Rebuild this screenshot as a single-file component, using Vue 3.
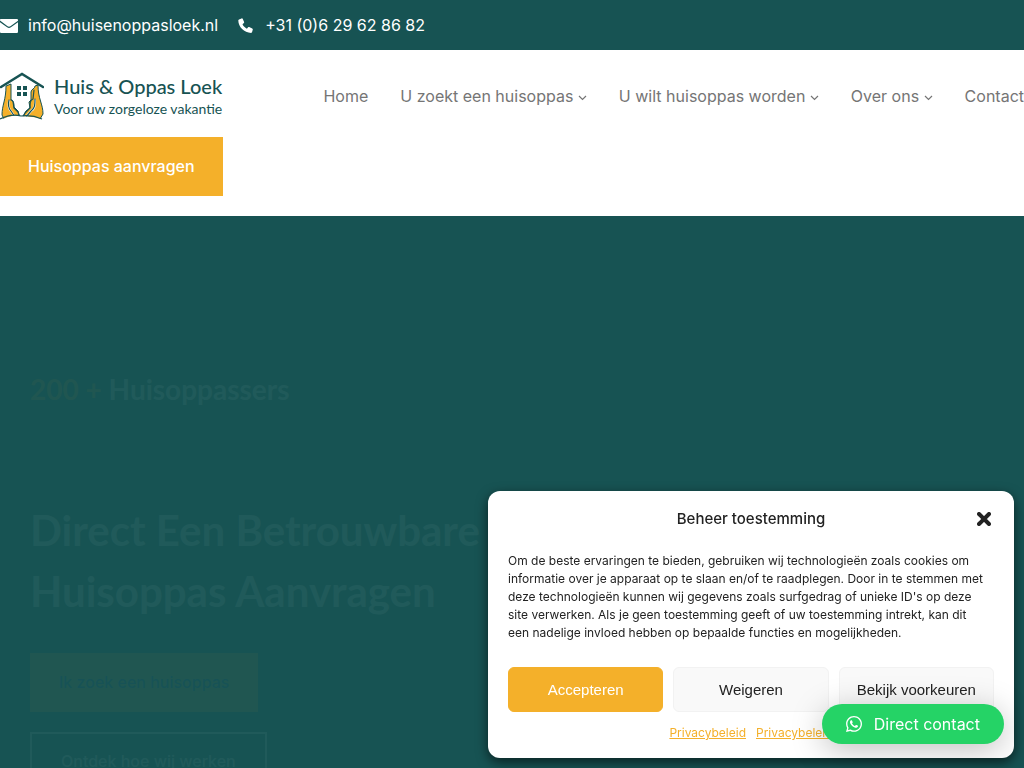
<script setup>
import { ref } from 'vue'

const consentOpen = ref(true)

const menu = [
  { label: 'Home', sub: false },
  { label: 'U zoekt een huisoppas', sub: true },
  { label: 'U wilt huisoppas worden', sub: true },
  { label: 'Over ons', sub: true },
  { label: 'Contact', sub: false },
]
</script>

<template>
  <div class="page">
    <div class="topbar">
      <a class="contact mail" href="mailto:info@huisenoppasloek.nl">
        <svg width="18" height="16" viewBox="0 0 18 16" aria-hidden="true">
          <path fill="#fff" d="M0 3.500V2.800C0 2.200.4 2 1 2h16c.6 0 1 .3 1 .9v.8l-7.600 5.500c-.8.6-2 .6-2.800 0zM0 5.200l7.100 5.100c1.200.8 2.600.8 3.800 0L18 5.200v9.300c0 1-.6 1.500-1.500 1.500h-15C.6 16 0 15.500 0 14.500z" />
        </svg>
        <span>info@huisenoppasloek.nl</span>
      </a>
      <a class="contact phone" href="tel:+31629628682">
        <svg width="15" height="15" viewBox="0 0 15 15" aria-hidden="true">
          <path fill="#fff" d="M1 1.600L3.600.4c.5-.2 1 0 1.200.5l1.300 3c.2.4.1.8-.2 1.100L4.500 6.300c.9 2 2.400 3.500 4.400 4.400l1.200-1.400c.3-.3.7-.4 1.100-.2l3 1.300c.5.2.7.7.6 1.200l-.7 2.500c-.1.500-.5.800-1 .8C6.200 14.900.3 9 .3 2.600c0-.5.2-.8.700-1z" />
        </svg>
        <span>+31 (0)6 29 62 86 82</span>
      </a>
    </div>

    <header class="header">
      <div class="bar">
        <a class="logo" href="#" aria-label="Huis &amp; Oppas Loek">
          <svg width="44" height="50" viewBox="0 0 44 50" aria-hidden="true">
            <g fill="#f4b02a" stroke="#175353" stroke-width="1" stroke-linejoin="round">
              <path d="M6 14l5-2v16c3 0 3 5 3 7l4 4 2 8H4l-2-4c0-10 4-15 4-29z" />
              <path d="M31 20c0-3 4-3 4-6l3-1c0 14 5 19 5 29l-3 5H22l4-8 4-3-1-6 2-2z" />
            </g>
            <g fill="none" stroke-linejoin="round" stroke-linecap="round">
              <path d="M9 29c-1 4-1 7 2 10l4 6M35 28c0 5 0 9-4 11l-5 6" stroke="#fff" stroke-width="2" />
              <path d="M11 28c3 0 2 4 3 8l4 4 2 6M9 28c-1 4-1 8 2 11l4 6" stroke="#175353" stroke-width="1.200" />
              <path d="M34 18l-1 9c-3 1-3 4-3 9l-5 5-3 5M35 27c0 6 0 9-4 12l-5 6" stroke="#175353" stroke-width="1.200" />
            </g>
            <path d="M1 15L22 2l21 13" fill="none" stroke="#175353" stroke-width="2.500" stroke-linecap="round" />
            <path d="M0 48c8-4 14-5 21-4s15 0 22 4v3H0z" fill="#fff" />
            <path d="M0 47c8-4 14-5 21-3 7-1 14 0 21 3" fill="none" stroke="#175353" stroke-width="1.200" />
            <path fill="#175353" d="M17 14h4v4h-4zM23 14h4v4h-4zM17 20h4v4h-4zM23 20h4v4h-4z" />
          </svg>
          <span class="wordmark">
            <span class="name">Huis &amp; Oppas Loek</span>
            <span class="tagline">Voor uw zorgeloze vakantie</span>
          </span>
        </a>
        <nav class="nav">
          <a v-for="item in menu" :key="item.label" href="#">
            {{ item.label }}
            <svg v-if="item.sub" width="9" height="7" viewBox="0 0 9 7" aria-hidden="true">
              <path d="M1 1l3.500 3.500L8 1" fill="none" stroke="#757575" stroke-width="1.200" />
            </svg>
          </a>
        </nav>
      </div>
      <a class="cta" href="#">Huisoppas aanvragen</a>
    </header>

    <main class="hero">
      <div class="intro">
        <h2><span class="count">200 +</span> Huisoppassers</h2>
        <h1>Direct Een Betrouwbare<br />Huisoppas Aanvragen</h1>
        <div class="actions">
          <a class="primary" href="#">Ik zoek een huisoppas</a>
          <a class="outline" href="#">Ontdek hoe wij werken</a>
        </div>
      </div>
    </main>

    <section v-if="consentOpen" class="consent" role="dialog" aria-labelledby="consent-title">
      <div class="consent-head">
        <h3 id="consent-title">Beheer toestemming</h3>
        <button class="close" type="button" aria-label="Sluiten" @click="consentOpen = false">
          <svg width="14" height="14" viewBox="0 0 14 14" aria-hidden="true">
            <path d="M2 2l10 10M12 2L2 12" stroke="#222" stroke-width="4" stroke-linecap="round" />
          </svg>
        </button>
      </div>
      <p>
        Om de beste ervaringen te bieden, gebruiken wij technologieën zoals cookies om informatie
        over je apparaat op te slaan en/of te raadplegen. Door in te stemmen met deze technologieën
        kunnen wij gegevens zoals surfgedrag of unieke ID's op deze site verwerken. Als je geen
        toestemming geeft of uw toestemming intrekt, kan dit een nadelige invloed hebben op
        bepaalde functies en mogelijkheden.
      </p>
      <div class="choices">
        <button class="accept" type="button">Accepteren</button>
        <button type="button">Weigeren</button>
        <button type="button">Bekijk voorkeuren</button>
      </div>
      <div class="links">
        <a href="#">Privacybeleid</a>
        <a href="#">Privacybeleid</a>
      </div>
    </section>

    <a class="whatsapp" href="#">
      <svg width="16" height="16" viewBox="0 0 448 448" aria-hidden="true">
        <path fill="#fff" d="M380.900 65.100C339 23.100 283.200 0 223.900 0 101.500 0 1.900 99.600 1.900 222c0 39.100 10.200 77.300 29.600 111L0 448l117.700-30.900c32.400 17.700 68.900 27 106.100 27h.1c122.300 0 224.100-99.600 224.100-222 0-59.300-25.200-115-67.100-157zM223.900 406.700c-33.200 0-65.700-8.900-94-25.700l-6.700-4-69.800 18.300L72 327.200l-4.400-7c-18.500-29.400-28.200-63.300-28.200-98.200 0-101.700 82.800-184.500 184.600-184.500 49.300 0 95.600 19.200 130.400 54.100s56.200 81.200 56.100 130.500c0 101.800-84.900 184.600-186.600 184.600zm101.200-138.200c-5.500-2.800-32.800-16.200-37.900-18-5.100-1.900-8.800-2.800-12.500 2.800s-14.300 18-17.600 21.800c-3.200 3.700-6.500 4.200-12 1.400-32.600-16.300-54-29.100-75.500-66-5.700-9.800 5.700-9.100 16.300-30.300 1.800-3.700.9-6.900-.5-9.700s-12.500-30.100-17.100-41.200c-4.500-10.800-9.100-9.300-12.500-9.500-3.200-.2-6.900-.2-10.600-.2s-9.700 1.400-14.800 6.900c-5.100 5.600-19.400 19-19.400 46.300s19.900 53.700 22.600 57.400c2.800 3.700 39.100 59.700 94.800 83.800 35.200 15.200 49 16.500 66.600 13.900 10.700-1.600 32.800-13.400 37.400-26.400s4.600-24.100 3.200-26.400c-1.300-2.500-5-3.900-10.500-6.600z" />
      </svg>
      <span>Direct contact</span>
    </a>
  </div>
</template>

<style>
body {
  margin: 0;
  background: #175353;
}
</style>

<style scoped>
.page {
  display: flex;
  flex-direction: column;
  height: 100vh;
  overflow: hidden;
  font-family: Inter, "Liberation Sans", sans-serif;
  font-size: 16px;
  font-weight: 400;
  line-height: 26px;
}
a {
  color: inherit;
  text-decoration: none;
}
.topbar {
  display: flex;
  gap: 20px;
  align-items: center;
  height: 50px;
  flex: none;
  background: #175353;
  color: #fff;
}
.contact {
  display: flex;
  align-items: center;
}
.mail {
  gap: 10px;
}
.phone {
  gap: 12px;
}
.header {
  flex: none;
  padding: 20px 0;
  background: #fff;
}
.bar {
  display: flex;
  justify-content: space-between;
  align-items: center;
  min-height: 53px;
  margin-bottom: 14px;
}
.logo {
  display: flex;
  gap: 10px;
  color: #175353;
  font-family: Lato, "Open Sans", sans-serif;
}
.wordmark {
  display: flex;
  flex-direction: column;
  padding-top: 2px;
  white-space: nowrap;
}
.name {
  font-size: 20px;
  font-weight: 500;
  line-height: 25px;
}
.tagline {
  font-size: 14px;
  font-weight: 400;
  line-height: 20px;
}
.nav {
  display: flex;
  gap: 32px;
  padding-bottom: 2px;
  color: #757575;
  white-space: nowrap;
}
.cta {
  display: inline-block;
  padding: 16px 28px 17px;
  background: #f4b02a;
  color: #fff;
  font-weight: 500;
}
.hero {
  flex: 1;
  min-height: 0;
  overflow: hidden;
  background: #175353;
  color: #fff;
}
.intro {
  padding: 152px 30px 0;
  opacity: 0.04;
}
h1,
h2 {
  margin: 0;
  font-family: Lato, "Open Sans", sans-serif;
  font-weight: 700;
}
h2 {
  font-size: 28px;
  line-height: 42px;
}
.count {
  color: #f4b02a;
}
h1 {
  margin-top: 90px;
  font-size: 42px;
  line-height: 61px;
}
.actions {
  display: flex;
  flex-direction: column;
  align-items: flex-start;
  gap: 20px;
  margin-top: 31px;
  font-weight: 500;
}
.primary {
  padding: 16px 29px 17px;
  background: #f4b02a;
  color: #1a4fa0;
}
.outline {
  padding: 14px 29px;
  border: 2px solid #fff;
}
.consent {
  position: fixed;
  right: 10px;
  bottom: 10px;
  box-sizing: border-box;
  width: 526px;
  max-width: calc(100vw - 20px);
  padding: 15px 20px 16px;
  border-radius: 12px;
  background: #fff;
  box-shadow: 0 4px 12px rgba(0, 0, 0, 0.6);
  color: #222;
}
.consent-head {
  display: grid;
  grid-template-columns: 20px 1fr 20px;
  align-items: center;
}
h3 {
  grid-column: 2;
  margin: 0;
  font-size: 15px;
  font-weight: 500;
  text-align: center;
}
.close {
  display: flex;
  justify-content: center;
  padding: 0;
  border: 0;
  background: none;
  cursor: pointer;
}
.consent p {
  margin: 20px 0 25px;
  padding-right: 8px;
  font-size: 12px;
  font-weight: 400;
  line-height: 18px;
}
.choices {
  display: grid;
  grid-template-columns: repeat(3, 1fr);
  gap: 10px;
}
.choices button {
  height: 45px;
  padding: 0;
  border: 1px solid #f2f2f2;
  border-radius: 6px;
  background: #f9f9f9;
  color: #222;
  font-family: "Liberation Sans", sans-serif;
  font-size: 15px;
  cursor: pointer;
}
.choices .accept {
  border-color: #f4b02a;
  background: #f4b02a;
  color: #fff;
}
.links {
  display: flex;
  justify-content: center;
  gap: 10px;
  margin-top: 12px;
  color: #f4b02a;
  font-size: 12px;
  line-height: 18px;
}
.links a {
  text-decoration: underline;
}
.whatsapp {
  position: fixed;
  right: 20px;
  bottom: 24px;
  display: flex;
  gap: 12px;
  align-items: center;
  height: 40px;
  padding: 0 24px;
  border-radius: 20px;
  background: #25d366;
  box-shadow: 0 6px 32px rgba(0, 0, 0, 0.25);
  color: #fff;
}
</style>
